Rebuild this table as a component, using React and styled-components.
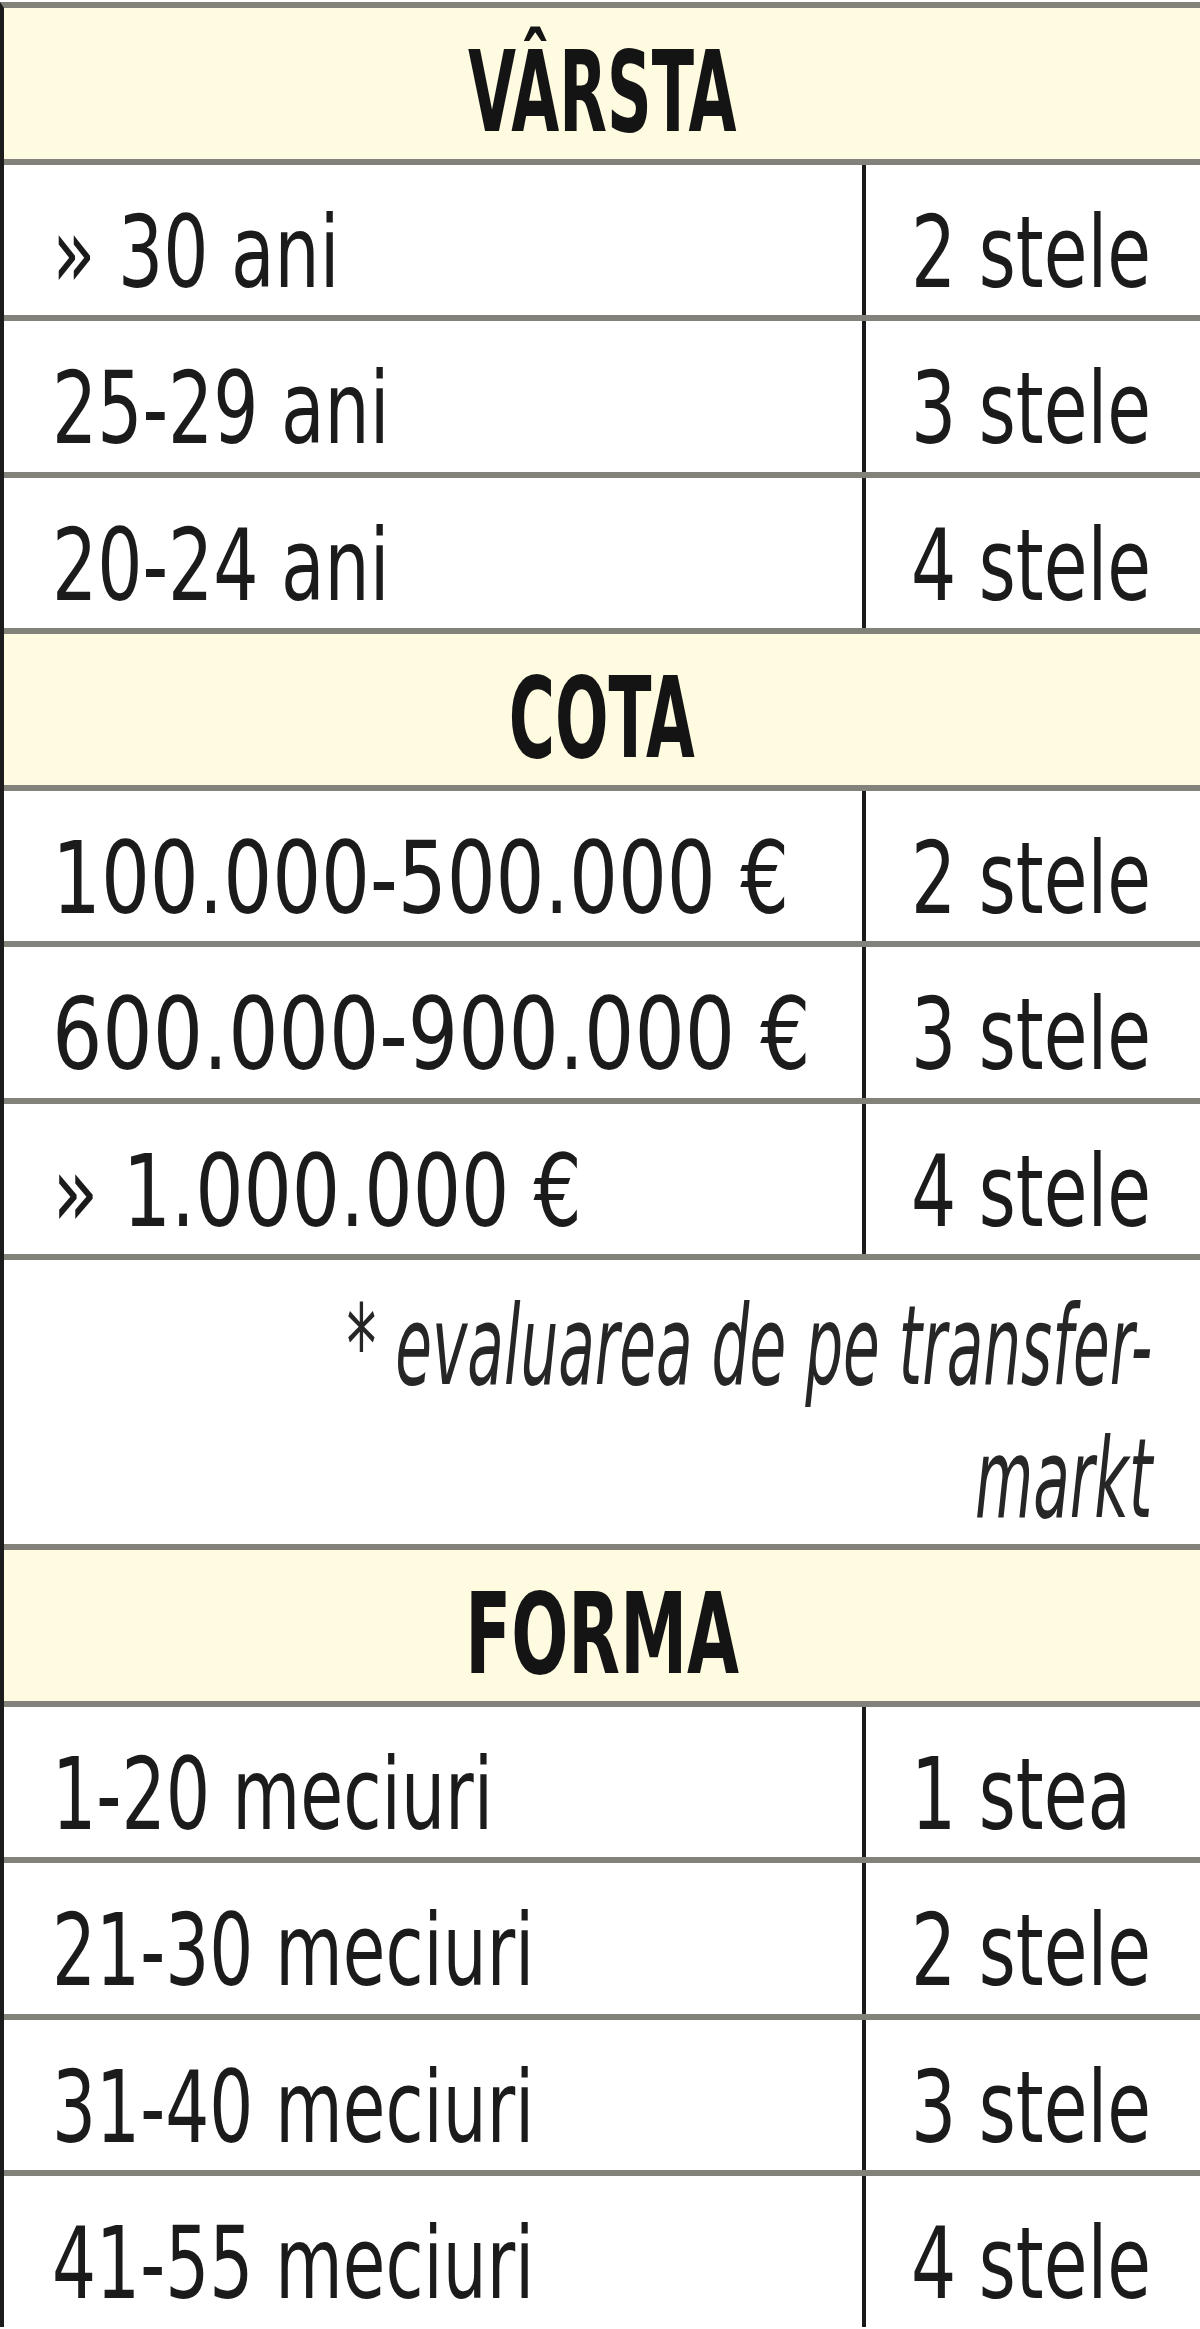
import React from 'react';
import styled, { createGlobalStyle } from 'styled-components';

const GlobalStyle = createGlobalStyle`
  html, body {
    margin: 0;
    padding: 0;
    background: #ffffff;
  }
  body {
    font-family: "DejaVu Sans Condensed", "DejaVu Sans", "Liberation Sans", sans-serif;
    color: #1b1b1b;
  }
`;

const Page = styled.div`
  width: 1200px;
  height: 2329px;
  overflow: hidden;
  padding-top: 2px;
  box-sizing: border-box;
`;

const Table = styled.div`
  display: flex;
  flex-direction: column;
  border-top: 6px solid #82827a;
  border-left: 4px solid #1c1c1c;
`;

const SectionHeader = styled.div`
  height: 156.5px;
  flex: none;
  box-sizing: border-box;
  padding-top: 28px;
  background: #fefbe0;
  border-bottom: 6px solid #82827a;
  text-align: center;
  font-size: 112px;
  font-weight: 700;
  line-height: 1;
  color: #141414;
`;

const HeaderText = styled.span`
  display: inline-block;
  transform: scaleX(${(p) => p.$squeeze});
  transform-origin: center;
  white-space: nowrap;
`;

const Row = styled.div`
  display: grid;
  grid-template-columns: 858px 1fr;
  height: ${(p) => (p.$last ? '150.5px' : '156.5px')};
  flex: none;
  box-sizing: border-box;
  border-bottom: ${(p) => (p.$last ? 'none' : '6px solid #82827a')};
`;

const Cell = styled.div`
  box-sizing: border-box;
  padding-top: 38px;
  padding-left: ${(p) => (p.$value ? '45px' : '48px')};
  border-left: ${(p) => (p.$value ? '4px solid #1a1a1a' : 'none')};
  font-size: 100px;
  line-height: 1;
  white-space: nowrap;
`;

const CellText = styled.span`
  display: inline-block;
  transform: scaleX(${(p) => p.$squeeze || 0.79});
  transform-origin: left center;
`;

const Note = styled.div`
  height: 290px;
  flex: none;
  box-sizing: border-box;
  padding: 20px 48px 0 0;
  border-bottom: 6px solid #82827a;
  display: flex;
  justify-content: flex-end;
  align-items: flex-start;
`;

const NoteText = styled.span`
  display: inline-block;
  flex: none;
  font-size: 110px;
  font-style: italic;
  line-height: 133px;
  color: #262626;
  text-align: right;
  white-space: nowrap;
  transform: scaleX(0.603);
  transform-origin: right top;
`;

const sections = [
  {
    title: 'VÂRSTA',
    squeeze: 0.615,
    rows: [
      { label: '» 30 ani', value: '2 stele' },
      { label: '25-29 ani', value: '3 stele' },
      { label: '20-24 ani', value: '4 stele' },
    ],
  },
  {
    title: 'COTA',
    squeeze: 0.625,
    rows: [
      { label: '100.000-500.000 €', value: '2 stele', squeeze: 0.855 },
      { label: '600.000-900.000 €', value: '3 stele', squeeze: 0.88 },
      { label: '» 1.000.000 €', value: '4 stele', squeeze: 0.845 },
    ],
    note: true,
  },
  {
    title: 'FORMA',
    squeeze: 0.667,
    rows: [
      { label: '1-20 meciuri', value: '1 stea', squeeze: 0.775 },
      { label: '21-30 meciuri', value: '2 stele', squeeze: 0.77 },
      { label: '31-40 meciuri', value: '3 stele', squeeze: 0.77 },
      { label: '41-55 meciuri', value: '4 stele', squeeze: 0.77 },
    ],
  },
];

const App = () => {
  return (
    <>
      <GlobalStyle />
      <Page>
        <Table>
          {sections.map((section, si) => (
            <React.Fragment key={section.title}>
              <SectionHeader>
                <HeaderText $squeeze={section.squeeze}>{section.title}</HeaderText>
              </SectionHeader>
              {section.rows.map((row, ri) => (
                <Row
                  key={row.label}
                  $last={si === sections.length - 1 && ri === section.rows.length - 1}
                >
                  <Cell>
                    <CellText $squeeze={row.squeeze}>{row.label}</CellText>
                  </Cell>
                  <Cell $value>
                    <CellText>{row.value}</CellText>
                  </Cell>
                </Row>
              ))}
              {section.note && (
                <Note>
                  <NoteText>
                    * evaluarea de pe transfer-
                    <br />
                    markt
                  </NoteText>
                </Note>
              )}
            </React.Fragment>
          ))}
        </Table>
      </Page>
    </>
  );
};

export default App;
